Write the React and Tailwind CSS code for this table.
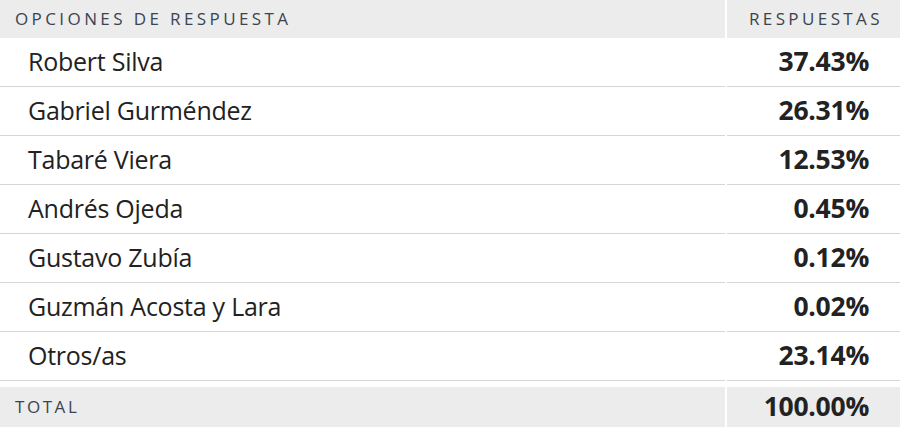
const rows = [
  { name: 'Robert Silva', pct: '37.43%' },
  { name: 'Gabriel Gurméndez', pct: '26.31%' },
  { name: 'Tabaré Viera', pct: '12.53%' },
  { name: 'Andrés Ojeda', pct: '0.45%' },
  { name: 'Gustavo Zubía', pct: '0.12%' },
  { name: 'Guzmán Acosta y Lara', pct: '0.02%' },
  { name: 'Otros/as', pct: '23.14%' },
];

export default function App() {
  return (
    <div
      className="w-[900px] h-[427px] bg-white text-[#222]"
      style={{ fontFamily: '"Open Sans", "Noto Sans", sans-serif' }}
    >
      <div className="grid grid-cols-[725px_1fr] gap-x-[2px]">
        <div className="h-[38px] bg-[#ebeceb] flex items-center pl-[15px] text-[17px] tracking-[0.2em] text-[#3a4450]">
          OPCIONES DE RESPUESTA
        </div>
        <div className="h-[38px] bg-[#ebeceb] flex items-center justify-end pr-[17px] text-[17px] tracking-[0.2em] text-[#3a4450]">
          RESPUESTAS
        </div>

        {rows.map((r) => (
          <div key={r.name} className="contents">
            <div className="h-[49px] border-b border-[#d6d6d6] flex items-center pl-[28px] text-[25px] tracking-[-0.01em]">
              {r.name}
            </div>
            <div className="h-[49px] border-b border-[#d6d6d6] flex items-center justify-end pr-[31px] text-[26.5px] font-bold tracking-[-0.01em]">
              {r.pct}
            </div>
          </div>
        ))}
      </div>

      <div className="grid grid-cols-[725px_1fr] gap-x-[2px] mt-[6px]">
        <div className="h-[40px] bg-[#ebeceb] flex items-center pl-[15px] text-[17px] tracking-[0.15em] text-[#3a4450]">
          TOTAL
        </div>
        <div className="h-[40px] bg-[#ebeceb] flex items-center justify-end pr-[31px] text-[26.5px] font-bold tracking-[-0.01em]">
          100.00%
        </div>
      </div>
    </div>
  );
}
